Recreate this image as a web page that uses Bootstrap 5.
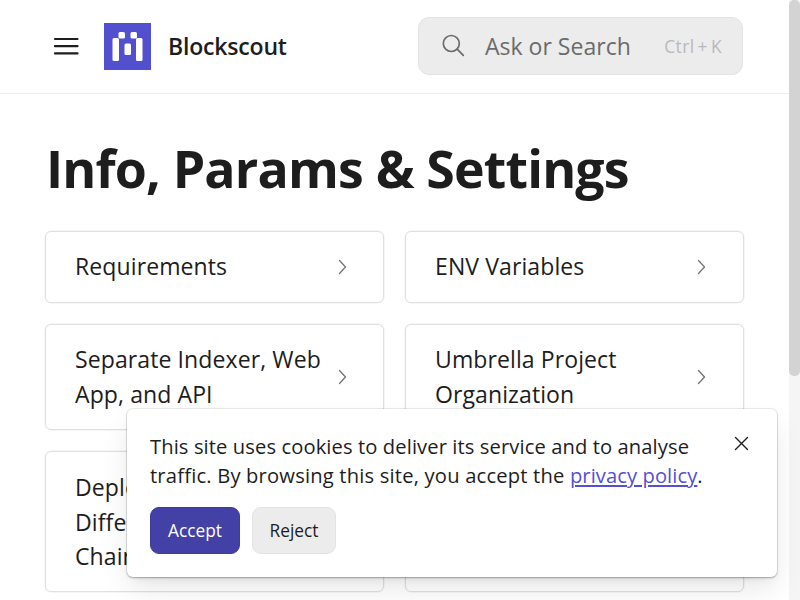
<!DOCTYPE html>
<html lang="en">
<head>
<meta charset="utf-8">
<meta name="viewport" content="width=device-width, initial-scale=1">
<title>Info, Params &amp; Settings | Blockscout</title>
<link href="https://cdn.jsdelivr.net/npm/bootstrap@5.3.0/dist/css/bootstrap.min.css" rel="stylesheet">
<style>
body { font-family: "Open Sans", sans-serif; font-size: 23.04px; line-height: 34.56px; color: #1d1d1d; background: #fff; }
svg { flex: none; display: block; }
.viewport { height: 600px; }
.page-area { background: #fff; }
.topbar { height: 94px; border-bottom: 1px solid #ececec; padding: 0 46px 1px 52px; }
.brand-name { font-weight: 600; margin-left: 17px; letter-spacing: -.2px; }
.logo-mark { margin-left: 24px; }
.search-box { width: 325px; height: 58px; background: #ececec; border: 1px solid #e3e3e3; border-radius: 11px; color: #6b6b6b; padding: 0 20px 0 22px; }
.search-box .shortcut { font-size: 17.28px; color: #b9b9b9; word-spacing: -2px; letter-spacing: .5px; padding-top: 2px; }
.page-title { font-size: 51.84px; line-height: 64px; font-weight: 700; letter-spacing: -.83px; margin: 42px 0 31px 1px; }
.content { padding: 0 45px; }
.topic-grid { display: grid; grid-template-columns: 339px 339px; grid-template-rows: 72px 106px 141px; gap: 21px; }
.topic { border: 1px solid #e0e0e0; border-radius: 6px; padding: 0 30px 0 29px; color: inherit; text-decoration: none; letter-spacing: .09px; box-shadow: 0 0 0 .5px #ededed; }
.topic-single span { padding-bottom: 1px; }
.topic-triple span { padding-top: 1px; }
.scroll-track { width: 11px; background: #f5f5f5; }
.scroll-thumb { height: 376px; background: #d3d3d3; border-radius: 5px; }
.cookie { right: 23px; bottom: 23px; width: 650px; height: 168px; background: #fff; border-radius: 6px; padding: 23px; font-size: 20.16px; line-height: 28.8px; box-shadow: 0 0 0 1px rgba(0,0,0,.07), 0 1px 2px rgba(0,0,0,.25), 0 14px 30px -3px rgba(0,0,0,.1), 0 6px 9px -6px rgba(0,0,0,.1); }
.cookie p { letter-spacing: .1px; }
.cookie .second-line { letter-spacing: .19px; }
.cookie a { color: #5350d4; letter-spacing: .08px; text-underline-offset: 2px; text-decoration-thickness: 2px; }
.cookie .btn { font-size: 17.28px; line-height: 24px; height: 47px; border-radius: 9px; padding: 2px 0 0; }
.btn-accept, .btn-accept:hover { background: #4340a6; border-color: #3e3b9e; color: #fff; width: 90px; }
.btn-reject, .btn-reject:hover { background: #ececec; border-color: #e3e3e3; color: #1d1d1d; width: 84px; }
.actions { padding-top: 17px; }
.dismiss { right: 28px; top: 27px; }
</style>
<script src="https://cdn.jsdelivr.net/npm/bootstrap@5.3.0/dist/js/bootstrap.bundle.min.js"></script>
</head>
<body>
<div class="viewport d-flex overflow-hidden position-relative">
  <div class="page-area flex-grow-1">
    <header class="topbar d-flex align-items-center">
      <svg width="28" height="24" viewBox="0 0 28 24" stroke="#1d1d1d" stroke-width="2.200" stroke-linecap="round"><path d="M3 5h22.500M3 12.200h22.500M3 19.400h22.500"/></svg>
      <svg class="logo-mark" width="47" height="47" viewBox="0 0 47 47"><path fill="#5350d0" d="M0 0h47v47H0z"/><g fill="#fff"><rect x="8.500" y="15" width="6.500" height="23" rx="1.500"/><rect x="14.500" y="9" width="6.500" height="6.500" rx="1.500"/><rect x="26.500" y="9" width="6.500" height="6.500" rx="1.500"/><rect x="32" y="15" width="6.500" height="23" rx="1.500"/><rect x="20.500" y="20.500" width="6.500" height="11.500" rx="1.500"/></g></svg>
      <span class="brand-name">Blockscout</span>
      <div class="search-box d-flex align-items-center ms-auto">
        <svg width="24" height="24" viewBox="0 0 24 24" fill="none" stroke="#6b6b6b" stroke-width="1.700" stroke-linecap="round"><circle cx="10.300" cy="9.500" r="8"/><path d="M16.200 15.200 22.300 21.300"/></svg>
        <span class="ms-3 ps-1">Ask or Search</span>
        <span class="shortcut ms-auto">Ctrl + K</span>
      </div>
    </header>
    <main class="content">
      <h1 class="page-title">Info, Params &amp; Settings</h1>
      <div class="topic-grid">
        <a class="topic topic-single d-flex align-items-center justify-content-between" href="#"><span>Requirements</span><svg width="22" height="22" viewBox="0 0 22 22" fill="none" stroke="#747474" stroke-width="1.300" stroke-linecap="round" stroke-linejoin="round"><path d="m8.500 4.500 6 6.500-6 6.500"/></svg></a>
        <a class="topic topic-single d-flex align-items-center justify-content-between" href="#"><span>ENV Variables</span><svg width="22" height="22" viewBox="0 0 22 22" fill="none" stroke="#747474" stroke-width="1.300" stroke-linecap="round" stroke-linejoin="round"><path d="m7.500 4.500 6 6.500-6 6.500"/></svg></a>
        <a class="topic d-flex align-items-center justify-content-between" href="#"><span>Separate Indexer, Web<br>App, and API</span><svg width="22" height="22" viewBox="0 0 22 22" fill="none" stroke="#747474" stroke-width="1.300" stroke-linecap="round" stroke-linejoin="round"><path d="m8.500 4.500 6 6.500-6 6.500"/></svg></a>
        <a class="topic d-flex align-items-center justify-content-between" href="#"><span>Umbrella Project<br>Organization</span><svg width="22" height="22" viewBox="0 0 22 22" fill="none" stroke="#747474" stroke-width="1.300" stroke-linecap="round" stroke-linejoin="round"><path d="m7.500 4.500 6 6.500-6 6.500"/></svg></a>
        <a class="topic topic-triple d-flex align-items-center" href="#"><span>Deploying<br>Different<br>Chains</span></a>
        <a class="topic" href="#" aria-label="More"></a>
      </div>
    </main>
  </div>
  <div class="scroll-track flex-shrink-0"><div class="scroll-thumb"></div></div>
  <section class="cookie position-absolute" aria-label="Cookies">
    <p class="m-0 text-nowrap">This site uses cookies to deliver its service and to analyse<br><span class="second-line">traffic. By browsing this site, you accept the <a href="#">privacy policy</a>.</span></p>
    <div class="actions d-flex gap-2">
      <button class="btn btn-accept me-1" type="button">Accept</button>
      <button class="btn btn-reject" type="button">Reject</button>
    </div>
    <svg class="dismiss position-absolute" width="16" height="16" viewBox="0 0 16 16" stroke="#1d1d1d" stroke-width="1.400" stroke-linecap="round"><path d="m2.500 1.500 12 12M14.500 1.500l-12 12"/></svg>
  </section>
</div>
</body>
</html>
